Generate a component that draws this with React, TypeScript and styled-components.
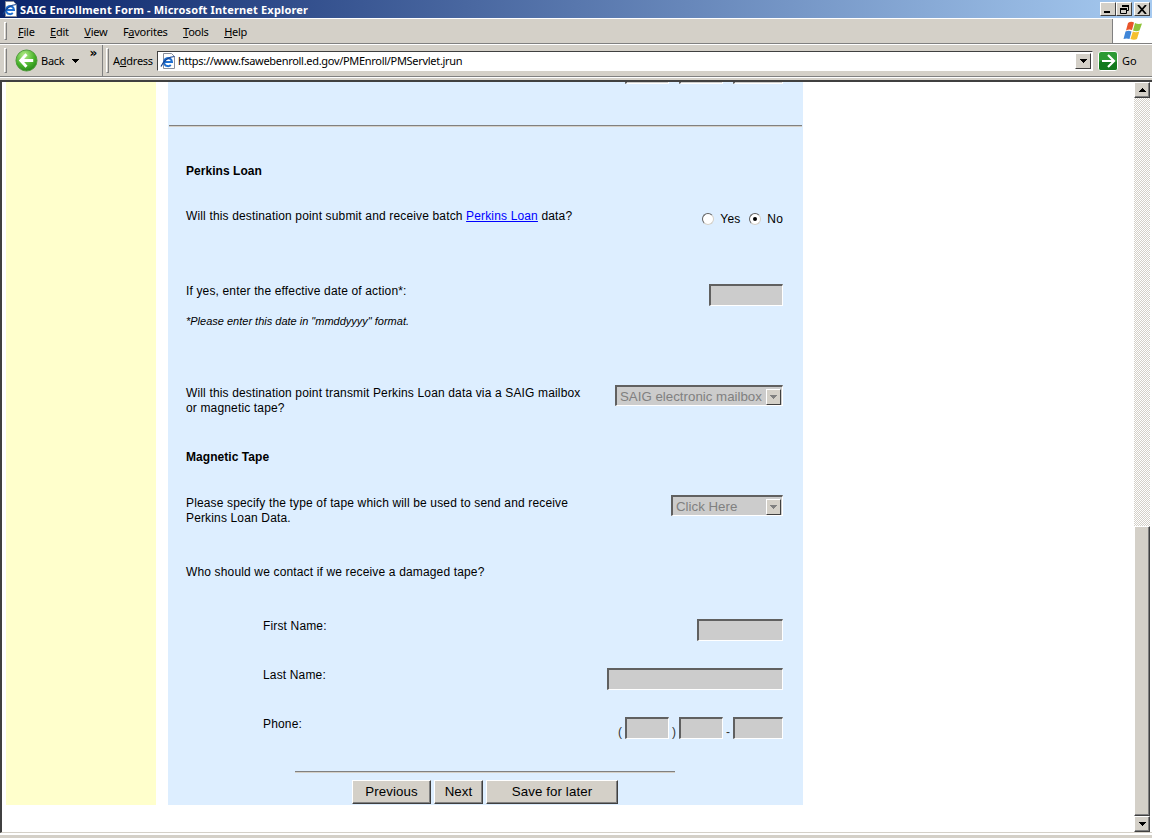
import React from "react";
import styled, {createGlobalStyle} from "styled-components";

const GlobalStyle = createGlobalStyle`
    html, body {
        margin: 0;
        padding: 0;
        height: 838px;
        overflow: hidden;
        background: #fff;
    }
`

const ArrowDown = ({color = "#000"}: {color?: string}) => (
    <svg width="7" height="4" viewBox="0 0 7 4">
        <path d="M0 0h7v1H6v1H5v1H4v1H3V3H2V2H1V1H0z" fill={color}/>
    </svg>
)

const ArrowUp = () => (
    <svg width="7" height="4" viewBox="0 0 7 4">
        <path d="M3 0h1v1h1v1h1v1h1v1H0V3h1V2h1V1h1z" fill="#000"/>
    </svg>
)

const IeIcon = ({size}: {size: number}) => (
    <svg width={size} height={size} viewBox="0 0 16 16">
        <path d="M3.500.500h8l3 3v12h-11z" fill="#fff" stroke="#8a8f9c"/>
        <path d="M4.500 9h7.500a4 4 0 1 0-1.200 3" fill="none" stroke="#1f6fd0" strokeWidth="2"/>
        <path d="M1 13.500C3 8 9 3.500 14.500 3.500" fill="none" stroke="#14418f" strokeWidth="1.200"/>
    </svg>
)

const BackIcon = () => (
    <svg width="23" height="23" viewBox="0 0 24 24">
        <defs>
            <radialGradient id="backFill" cx="40%" cy="25%" r="85%">
                <stop offset="0%" stopColor="#b6ec8a"/>
                <stop offset="55%" stopColor="#4cb52e"/>
                <stop offset="100%" stopColor="#1c7d12"/>
            </radialGradient>
        </defs>
        <circle cx="12" cy="12" r="11" fill="url(#backFill)" stroke="#4f9a3c"/>
        <path d="M12 5.500 6 12l6 6.500M6.500 12H19" fill="none" stroke="#fff" strokeWidth="3"/>
    </svg>
)

const GoIcon = () => (
    <svg width="20" height="20" viewBox="0 0 20 20">
        <rect x="0.500" y="0.500" width="19" height="19" rx="2.500" fill="#2c9a34" stroke="#fff"/>
        <rect x="1" y="10" width="18" height="9" rx="2" fill="#137a1d"/>
        <path d="M10 4l6 6-6 6M4 10h11" fill="none" stroke="#fff" strokeWidth="2.200"/>
    </svg>
)

const FlagIcon = () => (
    <svg width="22" height="20" viewBox="0 0 22 20">
        <path d="M6 2q3-2 6-.5L10 9q-3-1-6 .5z" fill="#e8542a"/>
        <path d="M13 2q3 1.500 7 .5l-2.500 7q-3 1.500-6.500 0z" fill="#8fc33a"/>
        <path d="M3.500 10.500q3-1.500 6 0L7.500 18q-3-1-6 0z" fill="#3f86d8"/>
        <path d="M10.800 10.500q3 1.500 6.500 0L15 18q-3 1.500-6.500 0z" fill="#f5c02e"/>
    </svg>
)

const Page = styled.div`
    width: 1152px;
    height: 838px;
    display: flex;
    flex-direction: column;
    background: #d4d0c8;
    overflow: hidden;
`

const TitleBar = styled.div`
    height: 18px;
    flex: none;
    display: flex;
    align-items: center;
    gap: 2px;
    padding: 0 2px;
    box-sizing: border-box;
    background: linear-gradient(90deg, #0a246a 0%, #a6caf0 100%);
`

const TitleText = styled.span`
    flex: 1;
    color: #fff;
    font: bold 11px "Noto Sans", sans-serif;
    letter-spacing: 0.16px;
    white-space: nowrap;
`

const WindowButtons = styled.div`
    display: flex;
`

const WindowButton = styled.div<{$gap?: boolean}>`
    width: 16px;
    height: 14px;
    margin-left: ${p => p.$gap ? "2px" : "0"};
    display: flex;
    align-items: center;
    justify-content: center;
    box-sizing: border-box;
    background: #d4d0c8;
    border: 1px solid;
    border-color: #fff #404040 #404040 #fff;
`

const MenuRow = styled.div`
    height: 24px;
    flex: none;
    display: flex;
    border-top: 1px solid #fff;
    border-bottom: 1px solid #808080;
`

const Grip = styled.div`
    width: 3px;
    flex: none;
    align-self: stretch;
    margin: 3px 0 3px 4px;
    background: #d4d0c8;
    border: 1px solid;
    border-color: #fff #808080 #808080 #fff;
    box-sizing: border-box;
`

const AddressGrip = styled(Grip)`
    margin-left: 3px;
`

const Menu = styled.div`
    flex: 1;
    display: flex;
    align-items: center;
    gap: 15.500px;
    padding-left: 11px;
    font: 11px "Noto Sans", sans-serif;
    letter-spacing: -0.25px;
    color: #000;
`

const FlagBox = styled.div`
    width: 39px;
    flex: none;
    background: #fff;
    display: flex;
    align-items: center;
    justify-content: center;
    border-left: 1px solid #808080;
`

const ToolRow = styled.div`
    height: 31px;
    flex: none;
    display: flex;
    align-items: center;
    border-top: 1px solid #fff;
    border-bottom: 1px solid #808080;
    box-shadow: 0 1px 0 #fff;
`

const BackGroup = styled.div`
    width: 103px;
    height: 100%;
    flex: none;
    box-sizing: border-box;
    display: flex;
    align-items: center;
    position: relative;
    font: 11px "Noto Sans", sans-serif;
    letter-spacing: -0.25px;
    gap: 4px;
    border-right: 1px solid #808080;
`

const BackButton = styled.div`
    display: flex;
    align-items: center;
    gap: 3px;
    padding-left: 4px;
`

const BackCaret = styled.span`
    display: flex;
    margin-left: 5px;
`

const Chevrons = styled.span`
    position: absolute;
    top: 1px;
    right: 5px;
    font: bold 12px "DejaVu Sans", sans-serif;
`

const AddressLabel = styled.span`
    width: 38px;
    flex: none;
    margin: 0 6px 0 4px;
    font: 11px "Noto Sans", sans-serif;
    letter-spacing: -0.25px;
    white-space: nowrap;
`

const AddressBox = styled.div`
    width: 936px;
    height: 20px;
    flex: none;
    box-sizing: border-box;
    display: flex;
    align-items: center;
    background: #fff;
    border: 1px solid;
    border-color: #404040 #fff #fff #404040;
    font: 11px "Noto Sans", sans-serif;
    letter-spacing: -0.3px;
    white-space: nowrap;
    gap: 2px;
    padding-left: 2px;
`

const AddressUrl = styled.span`
    flex: 1;
`

const ComboButton = styled.div`
    width: 16px;
    height: 16px;
    flex: none;
    margin-right: 1px;
    box-sizing: border-box;
    display: flex;
    align-items: center;
    justify-content: center;
    background: #d4d0c8;
    border: 1px solid;
    border-color: #fff #404040 #404040 #fff;
`

const GoGroup = styled.div`
    display: flex;
    align-items: center;
    gap: 4px;
    margin-left: 5px;
    font: 11px "Noto Sans", sans-serif;
`

const Viewport = styled.div`
    height: 753px;
    flex: none;
    display: flex;
    margin-top: 3px;
    background: #fff;
    border-top: 2px solid #404040;
    border-left: 2px solid #404040;
    border-bottom: 1px solid #d4d0c8;
    box-sizing: border-box;
    overflow: hidden;
`

const BottomEdge = styled.div`
    height: 2px;
    flex: none;
    background: #fff;
`

const Canvas = styled.div`
    flex: 1;
    display: flex;
    align-items: flex-start;
    gap: 12px;
    padding-left: 4px;
    background: #fff;
    overflow: hidden;
`

const SideColumn = styled.div`
    width: 150px;
    height: 723px;
    flex: none;
    background: #ffffcc;
`

const FormPanel = styled.div`
    width: 635px;
    height: 723px;
    flex: none;
    box-sizing: border-box;
    background: #ddeeff;
    font: 12px "Liberation Sans", Arial, sans-serif;
    color: #000;
    display: flex;
    flex-direction: column;
`

const ClippedInputs = styled.div`
    height: 2px;
    flex: none;
    display: flex;
    align-items: flex-end;
    justify-content: flex-end;
    padding-right: 20px;
    gap: 10px;
`

const Rule = styled.div`
    flex: none;
    margin: 41px 1px 0;
    border-top: 1px solid #808080;
    border-bottom: 1px solid #d4d0c8;
`

const Section = styled.div`
    display: flex;
    flex-direction: column;
    padding: 0 20px 0 18px;
`

const Heading = styled.div<{$top: number}>`
    margin-top: ${p => p.$top}px;
    font-weight: bold;
    line-height: 14px;
    letter-spacing: 0.05px;
`

const Row = styled.div<{$top: number; $indent?: number}>`
    display: flex;
    justify-content: space-between;
    align-items: flex-start;
    margin-top: ${p => p.$top}px;
    padding-left: ${p => p.$indent || 0}px;
    line-height: 14px;
`

const Question = styled.div<{$wrap?: boolean}>`
    width: ${p => p.$wrap ? "400px" : "auto"};
    padding-top: ${p => p.$wrap ? "1px" : "0"};
    line-height: ${p => p.$wrap ? "15px" : "14px"};
    letter-spacing: 0.15px;

    & a {
        color: #0000ff;
    }
`

const Note = styled.div`
    margin-top: 9px;
    font-size: 11px;
    font-style: italic;
    line-height: 12px;
`

const Radios = styled.div`
    display: flex;
    align-items: center;
    gap: 7px;
    margin-top: 3px;
`

const RadioLabel = styled.span`
    margin-left: -1px;
    letter-spacing: 0.15px;
    color: #000;

    & + span {
        margin-left: 2px;
    }
`

const RadioDot = styled.span<{$checked?: boolean}>`
    width: 12px;
    height: 12px;
    box-sizing: border-box;
    border-radius: 50%;
    background: #fff;
    border: 1px solid;
    border-color: #606060 #d4d0c8 #d4d0c8 #606060;
    display: inline-flex;
    align-items: center;
    justify-content: center;

    &::after {
        content: "";
        width: 4px;
        height: 4px;
        border-radius: 50%;
        background: ${p => p.$checked ? "#000" : "transparent"};
    }
`

const TextBox = styled.div<{$width: number}>`
    width: ${p => p.$width}px;
    height: 22px;
    flex: none;
    box-sizing: border-box;
    background: #cccccc;
    border: 2px solid;
    border-color: #606060 #fff #fff #606060;
    border-right-width: 1px;
    border-bottom-width: 1px;
`

const SelectBox = styled.div<{$width: number}>`
    width: ${p => p.$width}px;
    height: 21px;
    flex: none;
    box-sizing: border-box;
    display: flex;
    align-items: center;
    justify-content: space-between;
    padding: 1px 1px 0 3px;
    background: #cccccc;
    border: 2px solid;
    border-color: #606060 #fff #fff #606060;
    border-right-width: 1px;
    border-bottom-width: 1px;
    color: #808080;
    font-size: 13.300px;
    white-space: nowrap;
`

const SelectArrow = styled.span`
    width: 15px;
    height: 16px;
    flex: none;
    box-sizing: border-box;
    display: flex;
    align-items: center;
    justify-content: center;
    background: #d4d0c8;
    border: 1px solid;
    border-color: #fff #404040 #404040 #fff;
`

const PhoneGroup = styled.div`
    display: flex;
    align-items: flex-end;
    gap: 3px;
    color: #333;
`

const FooterRule = styled.div`
    width: 380px;
    flex: none;
    margin: 32px 0 0 127px;
    border-top: 1px solid #808080;
    border-bottom: 1px solid #d4d0c8;
`

const Buttons = styled.div`
    display: flex;
    gap: 3px;
    margin: 7px 0 0 184px;
`

const PushButton = styled.div<{$width: number}>`
    width: ${p => p.$width}px;
    height: 24px;
    box-sizing: border-box;
    display: flex;
    align-items: center;
    justify-content: center;
    padding-bottom: 2px;
    background: #d4d0c8;
    border: 1px solid;
    border-color: #fff #404040 #404040 #fff;
    box-shadow: inset -1px -1px 0 #808080;
    font-size: 13.300px;
    letter-spacing: 0.1px;
    color: #000;
`

const ScrollBar = styled.div`
    width: 16px;
    flex: none;
    margin-right: 2px;
    display: flex;
    flex-direction: column;
    background-image: repeating-conic-gradient(#d4d0c8 0 25%, #fff 0 50%);
    background-size: 2px 2px;
`

const ScrollTrack = styled.div`
    flex: 1;
`

const ScrollButton = styled.div`
    height: 16px;
    flex: none;
    box-sizing: border-box;
    display: flex;
    align-items: center;
    justify-content: center;
    background: #d4d0c8;
    border: 1px solid;
    border-color: #fff #404040 #404040 #fff;
    box-shadow: inset -1px -1px 0 #808080;
`

const ScrollThumb = styled.div`
    height: 290px;
    flex: none;
    box-sizing: border-box;
    background: #d4d0c8;
    border: 1px solid;
    border-color: #fff #404040 #404040 #fff;
    box-shadow: inset -1px -1px 0 #808080;
`

export default function App() {
    return (
        <Page>
            <GlobalStyle/>
            <TitleBar>
                <IeIcon size={16}/>
                <TitleText>SAIG Enrollment Form - Microsoft Internet Explorer</TitleText>
                <WindowButtons>
                    <WindowButton>
                        <svg width="8" height="8" viewBox="0 0 8 8"><path d="M0 6h6v2H0z"/></svg>
                    </WindowButton>
                    <WindowButton>
                        <svg width="9" height="9" viewBox="0 0 9 9">
                            <path d="M2.500.500h6v5h-2M.500 3.500h6v5h-6z" fill="none" stroke="#000"/>
                            <path d="M2 0h7v2H2zM0 3h7v2H0z"/>
                        </svg>
                    </WindowButton>
                    <WindowButton $gap>
                        <svg width="10" height="9" viewBox="0 0 10 9">
                            <path d="M1 0l8 9M9 0L1 9" stroke="#000" strokeWidth="1.800"/>
                        </svg>
                    </WindowButton>
                </WindowButtons>
            </TitleBar>

            <MenuRow>
                <Grip/>
                <Menu>
                    <span><u>F</u>ile</span>
                    <span><u>E</u>dit</span>
                    <span><u>V</u>iew</span>
                    <span>F<u>a</u>vorites</span>
                    <span><u>T</u>ools</span>
                    <span><u>H</u>elp</span>
                </Menu>
                <FlagBox><FlagIcon/></FlagBox>
            </MenuRow>

            <ToolRow>
                <BackGroup>
                    <Grip/>
                    <BackButton>
                        <BackIcon/>
                        <span>Back</span>
                        <BackCaret><ArrowDown/></BackCaret>
                    </BackButton>
                    <Chevrons>»</Chevrons>
                </BackGroup>
                <AddressGrip/>
                <AddressLabel>A<u>d</u>dress</AddressLabel>
                <AddressBox>
                    <IeIcon size={16}/>
                    <AddressUrl>https://www.fsawebenroll.ed.gov/PMEnroll/PMServlet.jrun</AddressUrl>
                    <ComboButton><ArrowDown/></ComboButton>
                </AddressBox>
                <GoGroup>
                    <GoIcon/>
                    <span>Go</span>
                </GoGroup>
            </ToolRow>

            <Viewport>
                <Canvas>
                    <SideColumn/>
                    <FormPanel>
                        <ClippedInputs>
                            <TextBox $width={44}/>
                            <TextBox $width={44}/>
                            <TextBox $width={50}/>
                        </ClippedInputs>
                        <Rule/>
                        <Section>
                            <Heading $top={37}>Perkins Loan</Heading>
                            <Row $top={31}>
                                <Question>Will this destination point submit and receive batch <a href="#perkins">Perkins Loan</a> data?</Question>
                                <Radios>
                                    <RadioDot/>
                                    <RadioLabel>Yes</RadioLabel>
                                    <RadioDot $checked/>
                                    <RadioLabel>No</RadioLabel>
                                </Radios>
                            </Row>
                            <Row $top={58}>
                                <Question>If yes, enter the effective date of action*:</Question>
                                <TextBox $width={74}/>
                            </Row>
                            <Note>*Please enter this date in "mmddyyyy" format.</Note>
                            <Row $top={58}>
                                <Question $wrap>Will this destination point transmit Perkins Loan data via a SAIG mailbox or magnetic tape?</Question>
                                <SelectBox $width={168}>SAIG electronic mailbox<SelectArrow><ArrowDown color="#808080"/></SelectArrow></SelectBox>
                            </Row>
                            <Heading $top={34}>Magnetic Tape</Heading>
                            <Row $top={31}>
                                <Question $wrap>Please specify the type of tape which will be used to send and receive Perkins Loan Data.</Question>
                                <SelectBox $width={112}>Click Here<SelectArrow><ArrowDown color="#808080"/></SelectArrow></SelectBox>
                            </Row>
                            <Row $top={39}>
                                <Question>Who should we contact if we receive a damaged tape?</Question>
                            </Row>
                            <Row $top={40} $indent={77}>
                                <Question>First Name:</Question>
                                <TextBox $width={86}/>
                            </Row>
                            <Row $top={27} $indent={77}>
                                <Question>Last Name:</Question>
                                <TextBox $width={176}/>
                            </Row>
                            <Row $top={27} $indent={77}>
                                <Question>Phone:</Question>
                                <PhoneGroup>
                                    <span>(</span><TextBox $width={44}/><span>)</span><TextBox $width={44}/><span>-</span><TextBox $width={50}/>
                                </PhoneGroup>
                            </Row>
                        </Section>
                        <FooterRule/>
                        <Buttons>
                            <PushButton $width={79}>Previous</PushButton>
                            <PushButton $width={49}>Next</PushButton>
                            <PushButton $width={132}>Save for later</PushButton>
                        </Buttons>
                    </FormPanel>
                </Canvas>
                <ScrollBar>
                    <ScrollButton><ArrowUp/></ScrollButton>
                    <ScrollTrack/>
                    <ScrollThumb/>
                    <ScrollButton><ArrowDown/></ScrollButton>
                </ScrollBar>
            </Viewport>
            <BottomEdge/>
        </Page>
    )
}
